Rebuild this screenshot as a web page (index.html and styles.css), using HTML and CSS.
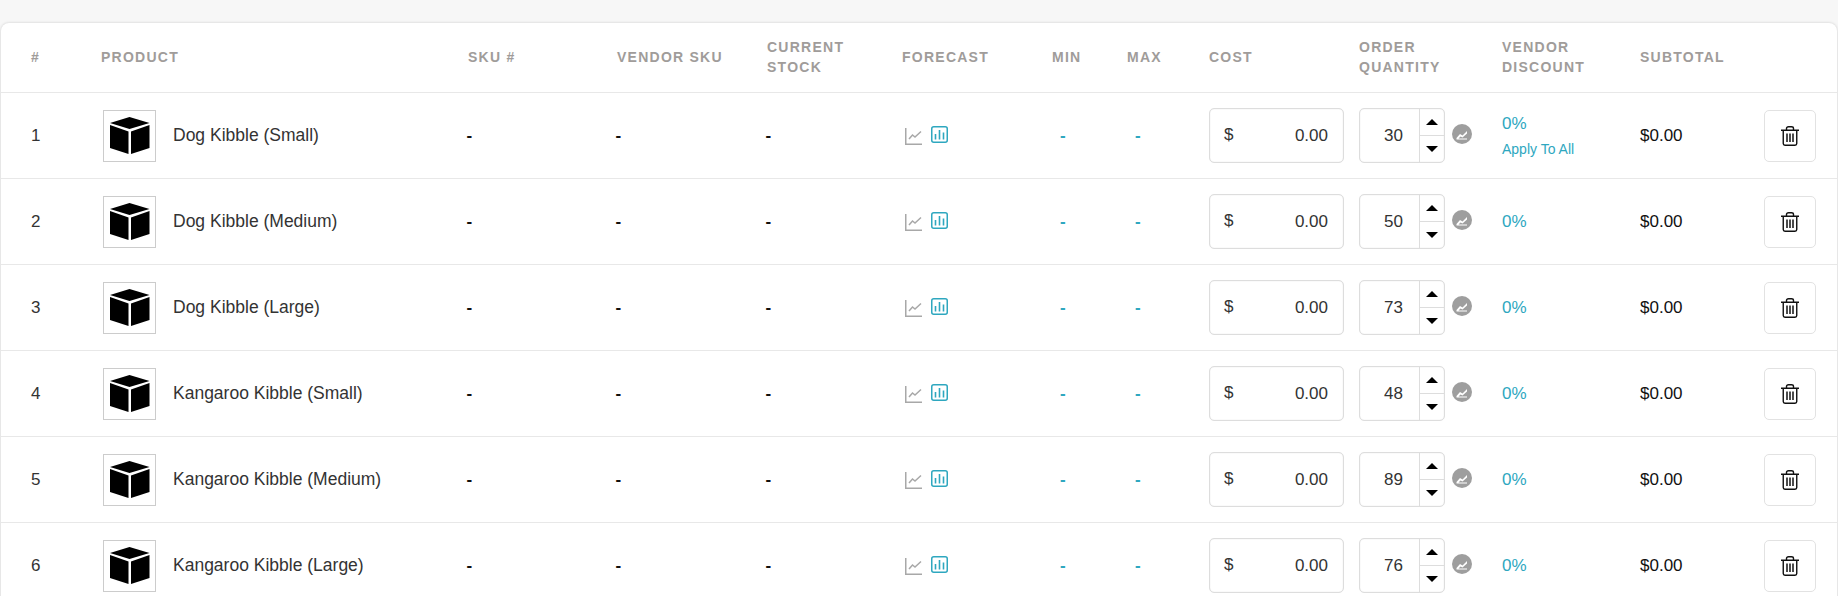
FILE: index.html
```html
<!DOCTYPE html>
<html>
<head>
	<meta charset="utf-8">
	<title>Purchase order items</title>
	<link rel="stylesheet" href="styles.css">
</head>
<body>
	<svg class="defs" width="0" height="0">
		<symbol id="cube" viewBox="0 0 40 37">
			<path d="M0 6 19.500 0 39.500 6 19.500 12z"/>
			<path d="M0 8 18.500 14.500V37L0 31z"/>
			<path d="M21 14.500 39.500 8V31L21 37z"/>
		</symbol>
		<symbol id="line-chart" viewBox="0 0 17 17">
			<path d="M.75 0V16.250H17" fill="none" stroke="currentColor" stroke-width="1.500"/>
			<path d="M4 11 7.500 7 10 9 16 3.500" fill="none" stroke="currentColor" stroke-width="1.500"/>
		</symbol>
		<symbol id="bar-chart" viewBox="0 0 17 17">
			<rect x=".75" y=".75" width="15.500" height="15.500" rx="2" fill="none" stroke="currentColor" stroke-width="1.500"/>
			<path d="M4.500 13.500V8M8.500 13.500V4M12.500 13.500V6.500" fill="none" stroke="currentColor" stroke-width="1.600"/>
		</symbol>
		<symbol id="trend" viewBox="0 0 20 20">
			<circle cx="10" cy="10" r="10" fill="#9e9e9e"/>
			<path d="M4.500 14 8 10 10.500 11.500 15 7V9.500L10.500 13.500 8.500 12.500 6.500 14.500H15V15.500H4.500z" fill="#fff"/>
		</symbol>
		<symbol id="trash" viewBox="0 0 18 20">
			<path d="M0 4.250H18M5.500 4V2.500Q5.500 .75 7.500 .75H10.500Q12.500 .75 12.500 2.500V4M2.250 4.250V17.500Q2.250 19.250 4 19.250H14Q15.750 19.250 15.750 17.500V4.250" fill="none" stroke="currentColor" stroke-width="1.400"/>
			<path d="M6 7.500V16M9 7.500V16M12 7.500V16" fill="none" stroke="currentColor" stroke-width="1.500"/>
		</symbol>
	</svg>

	<div class="card">
		<table class="items">
			<colgroup>
				<col class="c-num"><col class="c-product"><col class="c-sku"><col class="c-vendor-sku"><col class="c-stock"><col class="c-forecast"><col class="c-min"><col class="c-max"><col class="c-cost"><col class="c-qty"><col class="c-discount"><col class="c-subtotal"><col class="c-delete">
			</colgroup>
			<thead>
				<tr>
					<th class="num">#</th>
					<th>Product</th>
					<th>SKU #</th>
					<th>Vendor SKU</th>
					<th>Current<br>Stock</th>
					<th>Forecast</th>
					<th>Min</th>
					<th>Max</th>
					<th>Cost</th>
					<th>Order<br>Quantity</th>
					<th>Vendor<br>Discount</th>
					<th>Subtotal</th>
					<th></th>
				</tr>
			</thead>
			<tbody>
				<tr>
					<td class="num">1</td>
					<td><div class="product"><span class="thumb"><svg class="cube"><use href="#cube"/></svg></span>Dog Kibble (Small)</div></td>
					<td class="nil">-</td><td class="nil">-</td><td class="nil">-</td>
					<td><div class="forecast"><svg class="ico-line"><use href="#line-chart"/></svg><svg class="ico-bar"><use href="#bar-chart"/></svg></div></td>
					<td class="link dash">-</td><td class="link dash">-</td>
					<td><div class="cost"><span class="cur">$</span><span>0.00</span></div></td>
					<td><div class="qty-wrap"><div class="qty"><span class="qty-val">30</span><span class="spin"><i class="up"></i><i class="down"></i></span></div><svg class="ico-trend"><use href="#trend"/></svg></div></td>
					<td class="link">0%<a class="apply">Apply To All</a></td>
					<td class="total">$0.00</td>
					<td><button class="del"><svg class="ico-trash"><use href="#trash"/></svg></button></td>
				</tr>
				<tr>
					<td class="num">2</td>
					<td><div class="product"><span class="thumb"><svg class="cube"><use href="#cube"/></svg></span>Dog Kibble (Medium)</div></td>
					<td class="nil">-</td><td class="nil">-</td><td class="nil">-</td>
					<td><div class="forecast"><svg class="ico-line"><use href="#line-chart"/></svg><svg class="ico-bar"><use href="#bar-chart"/></svg></div></td>
					<td class="link dash">-</td><td class="link dash">-</td>
					<td><div class="cost"><span class="cur">$</span><span>0.00</span></div></td>
					<td><div class="qty-wrap"><div class="qty"><span class="qty-val">50</span><span class="spin"><i class="up"></i><i class="down"></i></span></div><svg class="ico-trend"><use href="#trend"/></svg></div></td>
					<td class="link">0%</td>
					<td class="total">$0.00</td>
					<td><button class="del"><svg class="ico-trash"><use href="#trash"/></svg></button></td>
				</tr>
				<tr>
					<td class="num">3</td>
					<td><div class="product"><span class="thumb"><svg class="cube"><use href="#cube"/></svg></span>Dog Kibble (Large)</div></td>
					<td class="nil">-</td><td class="nil">-</td><td class="nil">-</td>
					<td><div class="forecast"><svg class="ico-line"><use href="#line-chart"/></svg><svg class="ico-bar"><use href="#bar-chart"/></svg></div></td>
					<td class="link dash">-</td><td class="link dash">-</td>
					<td><div class="cost"><span class="cur">$</span><span>0.00</span></div></td>
					<td><div class="qty-wrap"><div class="qty"><span class="qty-val">73</span><span class="spin"><i class="up"></i><i class="down"></i></span></div><svg class="ico-trend"><use href="#trend"/></svg></div></td>
					<td class="link">0%</td>
					<td class="total">$0.00</td>
					<td><button class="del"><svg class="ico-trash"><use href="#trash"/></svg></button></td>
				</tr>
				<tr>
					<td class="num">4</td>
					<td><div class="product"><span class="thumb"><svg class="cube"><use href="#cube"/></svg></span>Kangaroo Kibble (Small)</div></td>
					<td class="nil">-</td><td class="nil">-</td><td class="nil">-</td>
					<td><div class="forecast"><svg class="ico-line"><use href="#line-chart"/></svg><svg class="ico-bar"><use href="#bar-chart"/></svg></div></td>
					<td class="link dash">-</td><td class="link dash">-</td>
					<td><div class="cost"><span class="cur">$</span><span>0.00</span></div></td>
					<td><div class="qty-wrap"><div class="qty"><span class="qty-val">48</span><span class="spin"><i class="up"></i><i class="down"></i></span></div><svg class="ico-trend"><use href="#trend"/></svg></div></td>
					<td class="link">0%</td>
					<td class="total">$0.00</td>
					<td><button class="del"><svg class="ico-trash"><use href="#trash"/></svg></button></td>
				</tr>
				<tr>
					<td class="num">5</td>
					<td><div class="product"><span class="thumb"><svg class="cube"><use href="#cube"/></svg></span>Kangaroo Kibble (Medium)</div></td>
					<td class="nil">-</td><td class="nil">-</td><td class="nil">-</td>
					<td><div class="forecast"><svg class="ico-line"><use href="#line-chart"/></svg><svg class="ico-bar"><use href="#bar-chart"/></svg></div></td>
					<td class="link dash">-</td><td class="link dash">-</td>
					<td><div class="cost"><span class="cur">$</span><span>0.00</span></div></td>
					<td><div class="qty-wrap"><div class="qty"><span class="qty-val">89</span><span class="spin"><i class="up"></i><i class="down"></i></span></div><svg class="ico-trend"><use href="#trend"/></svg></div></td>
					<td class="link">0%</td>
					<td class="total">$0.00</td>
					<td><button class="del"><svg class="ico-trash"><use href="#trash"/></svg></button></td>
				</tr>
				<tr>
					<td class="num">6</td>
					<td><div class="product"><span class="thumb"><svg class="cube"><use href="#cube"/></svg></span>Kangaroo Kibble (Large)</div></td>
					<td class="nil">-</td><td class="nil">-</td><td class="nil">-</td>
					<td><div class="forecast"><svg class="ico-line"><use href="#line-chart"/></svg><svg class="ico-bar"><use href="#bar-chart"/></svg></div></td>
					<td class="link dash">-</td><td class="link dash">-</td>
					<td><div class="cost"><span class="cur">$</span><span>0.00</span></div></td>
					<td><div class="qty-wrap"><div class="qty"><span class="qty-val">76</span><span class="spin"><i class="up"></i><i class="down"></i></span></div><svg class="ico-trend"><use href="#trend"/></svg></div></td>
					<td class="link">0%</td>
					<td class="total">$0.00</td>
					<td><button class="del"><svg class="ico-trash"><use href="#trash"/></svg></button></td>
				</tr>
			</tbody>
		</table>
	</div>
</body>
</html>
```

FILE: styles.css
```css
html, body {
	height: 100%;
}

body {
	margin: 0;
	padding: 23px 1px 0;
	box-sizing: border-box;
	overflow: hidden;
	background: #f7f7f7;
	font-family: "Liberation Sans", Arial, sans-serif;
	font-size: 17px;
	color: #333;
}

.defs {
	position: absolute;
}

.card {
	background: #fff;
	border-radius: 8px 8px 0 0;
	box-shadow: 0 0 3px rgba(0, 0, 0, .18);
}

.items {
	width: 1836px;
	table-layout: fixed;
	border-collapse: collapse;
}

.c-num { width: 100px; }
.c-product { width: 367px; }
.c-sku { width: 149px; }
.c-vendor-sku { width: 150px; }
.c-stock { width: 135px; }
.c-forecast { width: 150px; }
.c-min { width: 75px; }
.c-max { width: 82px; }
.c-cost { width: 150px; }
.c-qty { width: 143px; }
.c-discount { width: 138px; }
.c-subtotal { width: 124px; }
.c-delete { width: 73px; }

th, td {
	padding: 0;
	text-align: left;
	vertical-align: middle;
}

th {
	height: 67px;
	padding-bottom: 2px;
	border-bottom: 1px solid #e8e8e8;
	font-size: 14px;
	line-height: 20px;
	font-weight: bold;
	letter-spacing: 1.250px;
	text-transform: uppercase;
	color: #a09c9a;
}

td {
	height: 85px;
	border-bottom: 1px solid #e8e8e8;
}

.num {
	padding-left: 30px;
}

.product {
	display: flex;
	align-items: center;
	gap: 17px;
	padding-left: 2px;
	font-size: 17.500px;
}

.thumb {
	display: flex;
	align-items: center;
	justify-content: center;
	box-sizing: border-box;
	width: 53px;
	height: 52px;
	border: 1px solid #ccc;
}

.cube {
	width: 40px;
	height: 37px;
	fill: #000;
}

.nil {
	font-weight: bold;
	color: #111;
	text-indent: -1.500px;
}

.total {
	color: #111;
}

.forecast {
	display: flex;
	align-items: flex-start;
	gap: 9px;
	padding-left: 3px;
}

.ico-line {
	width: 17px;
	height: 17px;
	margin-top: 2px;
	color: #a8a8a8;
}

.ico-bar {
	width: 17px;
	height: 17px;
	color: #2ea7bf;
}

.link {
	color: #2ea7bf;
}

.dash {
	padding-left: 8px;
	font-weight: bold;
}

.apply {
	display: block;
	margin-top: 7px;
	font-size: 14px;
	font-weight: normal;
}

.cost {
	display: flex;
	justify-content: space-between;
	align-items: center;
	box-sizing: border-box;
	width: 135px;
	height: 55px;
	padding: 0 15px 0 14px;
	border: 1px solid #ddd;
	border-radius: 5px;
	box-shadow: inset 0 0 1px #ccc;
}

.cur {
	margin-bottom: 2px;
}

.qty-wrap {
	display: flex;
	align-items: center;
	gap: 7px;
}

.qty {
	display: flex;
	box-sizing: border-box;
	width: 86px;
	height: 55px;
	border: 1px solid #ddd;
	border-radius: 5px;
	box-shadow: inset 0 0 1px #ccc;
}

.qty-val {
	flex: 1;
	align-self: center;
	padding-right: 16px;
	text-align: right;
}

.spin {
	display: flex;
	flex-direction: column;
	width: 24px;
	border-left: 1px solid #ddd;
}

.spin i {
	flex: 1;
	display: flex;
	align-items: center;
	justify-content: center;
}

.spin .up {
	border-bottom: 1px solid #ddd;
}

.spin i::before {
	content: "";
	border-left: 6px solid transparent;
	border-right: 6px solid transparent;
}

.spin .up::before {
	border-bottom: 6px solid #000;
}

.spin .down::before {
	border-top: 6px solid #000;
}

.ico-trend {
	width: 20px;
	height: 20px;
	margin-top: -4px;
}

.del {
	display: flex;
	align-items: center;
	justify-content: center;
	width: 52px;
	height: 52px;
	padding: 0;
	background: #fff;
	border: 1px solid #e2e2e2;
	border-radius: 5px;
}

.ico-trash {
	width: 18px;
	height: 20px;
	color: #111;
}
```
